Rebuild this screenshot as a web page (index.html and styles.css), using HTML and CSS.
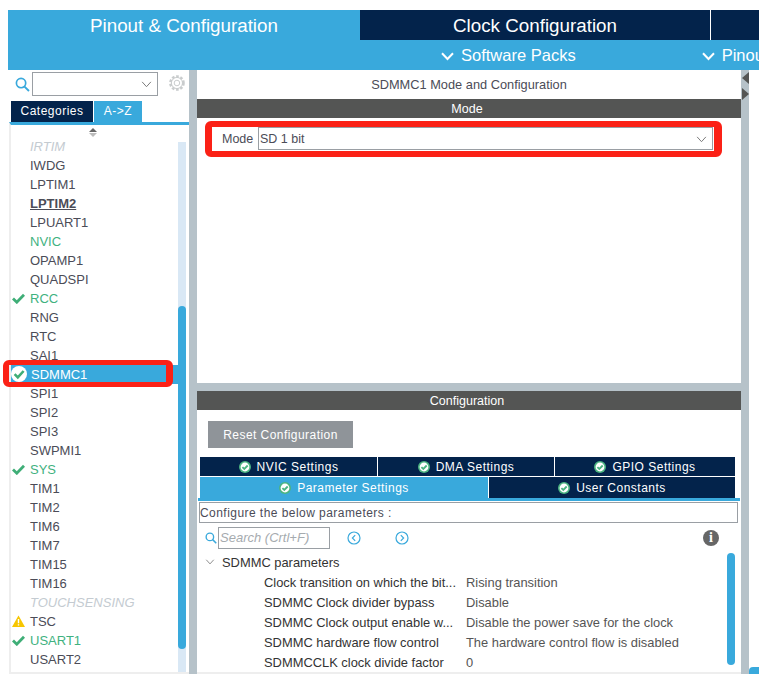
FILE: index.html

```html
<!DOCTYPE html>
<html lang="en">
<head>
  <meta charset="UTF-8">
  <title>SDMMC1 Mode and Configuration</title>
  <link rel="stylesheet" href="styles.css">
</head>
<body>
  <svg class="defs" width="0" height="0">
    <symbol id="tick-round" viewBox="0 0 12 12">
      <circle cx="6" cy="6" r="6" fill="#4cb582"/>
      <circle cx="6" cy="6" r="4.4" fill="#fff"/>
      <path d="M3.4 6.1 5.3 8 8.7 4.5" fill="none" stroke="#4cb582" stroke-width="1.8"/>
    </symbol>
    <symbol id="tick-white" viewBox="0 0 16 16">
      <circle cx="8" cy="8" r="8" fill="#fff"/>
      <path d="M3.6 8.2 6.8 11.4 12.6 5" fill="none" stroke="#3fae77" stroke-width="2.6"/>
    </symbol>
    <symbol id="tick" viewBox="0 0 13 11">
      <path d="M1 5.5 4.8 9.2 12 1.8" fill="none" stroke="#3fae77" stroke-width="2.8"/>
    </symbol>
    <symbol id="chev" viewBox="0 0 12 8">
      <path d="M1 1 6 6.5 11 1" fill="none" stroke="currentColor" stroke-width="1.1"/>
    </symbol>
    <symbol id="chev-bold" viewBox="0 0 13 9">
      <path d="M1 1.2 6.5 7 12 1.2" fill="none" stroke="currentColor" stroke-width="2"/>
    </symbol>
    <symbol id="glass" viewBox="0 0 16 16">
      <circle cx="6.5" cy="6.5" r="5" fill="none" stroke="currentColor" stroke-width="1.8"/>
      <path d="M10.2 10.2 15 15" stroke="currentColor" stroke-width="2"/>
    </symbol>
  </svg>

  <header class="topbar">
    <nav class="main-tabs">
      <div class="main-tab active">Pinout &amp; Configuration</div>
      <div class="main-tab clock">Clock Configuration</div>
      <div class="main-tab rest"></div>
    </nav>
    <div class="sub-menu">
      <span class="sub-item packs"><svg class="sub-chev"><use href="#chev-bold"/></svg>Software Packs</span>
      <span class="sub-item pinout"><svg class="sub-chev"><use href="#chev-bold"/></svg>Pinout</span>
    </div>
  </header>

  <main class="workspace">
    <aside class="sidebar">
      <div class="search-row">
        <svg class="search-icon"><use href="#glass"/></svg>
        <div class="combo"><svg class="combo-chev"><use href="#chev"/></svg></div>
        <svg class="gear" viewBox="0 0 18 18">
          <circle cx="9" cy="9" r="6.6" fill="none" stroke="#c9cccd" stroke-width="2.6" stroke-dasharray="2.6 1.7"/>
          <circle cx="9" cy="9" r="5.6" fill="none" stroke="#c9cccd" stroke-width="1"/>
          <circle cx="9" cy="9" r="2.8" fill="none" stroke="#c9cccd" stroke-width="1"/>
        </svg>
      </div>
      <div class="side-tabs">
        <div class="side-tab">Categories</div>
        <div class="side-tab active">A-&gt;Z</div>
      </div>
      <div class="peri-box">
        <div class="sort-arrows"><i class="up"></i><i class="down"></i></div>
        <ul class="peri-list">
          <li class="off">IRTIM</li>
          <li>IWDG</li>
          <li>LPTIM1</li>
          <li class="bold">LPTIM2</li>
          <li>LPUART1</li>
          <li class="green">NVIC</li>
          <li>OPAMP1</li>
          <li>QUADSPI</li>
          <li class="green"><svg class="mark"><use href="#tick"/></svg>RCC</li>
          <li>RNG</li>
          <li>RTC</li>
          <li>SAI1</li>
          <li class="selected"><svg class="mark-round"><use href="#tick-white"/></svg>SDMMC1</li>
          <li>SPI1</li>
          <li>SPI2</li>
          <li>SPI3</li>
          <li>SWPMI1</li>
          <li class="green"><svg class="mark"><use href="#tick"/></svg>SYS</li>
          <li>TIM1</li>
          <li>TIM2</li>
          <li>TIM6</li>
          <li>TIM7</li>
          <li>TIM15</li>
          <li>TIM16</li>
          <li class="off">TOUCHSENSING</li>
          <li><svg class="mark warn" viewBox="0 0 13 12"><path d="M6.5 0.5 13 12H0Z" fill="#f7c600"/><path d="M6.5 4v4.2M6.5 9.2v1.3" stroke="#fff" stroke-width="1.4"/></svg>TSC</li>
          <li class="green"><svg class="mark"><use href="#tick"/></svg>USART1</li>
          <li>USART2</li>
        </ul>
        <div class="side-scroll"><div class="side-thumb"></div></div>
      </div>
      <div class="callout callout-list"></div>
    </aside>

    <section class="center">
      <div class="mode-panel">
        <h2 class="panel-title">SDMMC1 Mode and Configuration</h2>
        <div class="band">Mode</div>
        <div class="mode-row">
          <span class="mode-label">Mode</span>
          <div class="mode-select">SD 1 bit<svg class="combo-chev"><use href="#chev"/></svg></div>
        </div>
        <div class="callout callout-mode"></div>
      </div>

      <div class="config-panel">
        <div class="band">Configuration</div>
        <button class="reset-btn">Reset Configuration</button>
        <div class="cfg-tabs">
          <div class="cfg-tab nvic"><svg class="tab-tick"><use href="#tick-round"/></svg>NVIC Settings</div>
          <div class="cfg-tab dma"><svg class="tab-tick"><use href="#tick-round"/></svg>DMA Settings</div>
          <div class="cfg-tab"><svg class="tab-tick"><use href="#tick-round"/></svg>GPIO Settings</div>
        </div>
        <div class="cfg-tabs second">
          <div class="cfg-tab active"><svg class="tab-tick"><use href="#tick-round"/></svg>Parameter Settings</div>
          <div class="cfg-tab"><svg class="tab-tick"><use href="#tick-round"/></svg>User Constants</div>
        </div>
        <div class="tabs-line"></div>
        <div class="configure-box">Configure the below parameters :</div>
        <div class="param-search">
          <svg class="param-glass"><use href="#glass"/></svg>
          <div class="param-input">Search (Crtl+F)</div>
          <svg class="nav-btn first" viewBox="0 0 14 14"><circle cx="7" cy="7" r="6" fill="none" stroke="#39a9dc" stroke-width="1.2"/><path d="M8.2 4.2 5.4 7l2.8 2.8" fill="none" stroke="#39a9dc" stroke-width="1.2"/></svg>
          <svg class="nav-btn" viewBox="0 0 14 14"><circle cx="7" cy="7" r="6" fill="none" stroke="#39a9dc" stroke-width="1.2"/><path d="M5.8 4.2 8.6 7l-2.8 2.8" fill="none" stroke="#39a9dc" stroke-width="1.2"/></svg>
          <div class="info">i</div>
        </div>
        <div class="param-tree">
          <div class="tree-head"><svg class="tree-chev"><use href="#chev"/></svg>SDMMC parameters</div>
          <div class="param"><span class="param-name">Clock transition on which the bit...</span><span>Rising transition</span></div>
          <div class="param"><span class="param-name">SDMMC Clock divider bypass</span><span>Disable</span></div>
          <div class="param"><span class="param-name">SDMMC Clock output enable w...</span><span>Disable the power save for the clock</span></div>
          <div class="param"><span class="param-name">SDMMC hardware flow control</span><span>The hardware control flow is disabled</span></div>
          <div class="param"><span class="param-name">SDMMCCLK clock divide factor</span><span>0</span></div>
          <div class="tree-thumb"></div>
        </div>
      </div>
    </section>

    <div class="right-rail">
      <i class="rail-arrow left"></i>
      <i class="rail-arrow right"></i>
    </div>
    <div class="far-right"><div class="far-thumb"></div></div>
  </main>
</body>
</html>
```

FILE: styles.css

```css
* { box-sizing: border-box; }
html, body {
  margin: 0;
  height: 674px;
  overflow: hidden;
}
body {
  background-color: #fff;
  font-family: "Liberation Sans", Arial, sans-serif;
  font-size: 13px;
  color: #4b4c57;
  padding-top: 10px;
}
.defs { position: absolute; }

/* top bar */
.topbar {
  margin-left: 8px;
  height: 60px;
  background-color: #39a9dc;
  color: #fff;
}
.main-tabs {
  display: flex;
  height: 30px;
}
.main-tab {
  font-size: 18.8px;
  line-height: 31px;
  text-align: center;
  background-color: #03234b;
}
.main-tab.active {
  width: 351px;
  background-color: #39a9dc;
  text-align: left;
  padding-left: 82px;
}
.main-tab.clock {
  width: 351px;
  margin-left: 1px;
  border-right: 1px solid #fff;
}
.main-tab.rest { flex: 1; }
.sub-menu {
  display: flex;
  height: 30px;
  font-size: 16.5px;
  line-height: 31px;
  padding-left: 433px;
}
.sub-item { white-space: nowrap; }
.sub-item.pinout { margin-left: 126px; }
.sub-chev {
  width: 13px;
  height: 9px;
  margin-right: 7px;
}

/* main area */
.workspace {
  display: flex;
  height: 604px;
  margin-left: 8px;
}
.sidebar {
  position: relative;
  width: 181px;
  flex: none;
}
.search-row {
  display: flex;
  align-items: center;
  height: 26px;
  margin-bottom: 5px;
  padding: 2px 3px 0 7px;
  color: #39a9dc;
}
.search-icon {
  width: 15px;
  height: 15px;
  margin-right: 2px;
}
.combo {
  position: relative;
  width: 127px;
  height: 24px;
  border: 1px solid #9a9fa4;
  background-color: #fff;
  color: #777;
}
.combo-chev {
  position: absolute;
  right: 5px;
  top: 8px;
  width: 11px;
  height: 7px;
  color: #777;
}
.gear {
  width: 18px;
  height: 18px;
  margin: -2px 0 0 10px;
}
.side-tabs {
  display: flex;
  gap: 1px;
  height: 21px;
  margin-left: 3px;
}
.side-tab {
  width: 82px;
  font-size: 12px;
  line-height: 20px;
  text-align: center;
  letter-spacing: 0.5px;
  color: #fff;
  background-color: #03234b;
}
.side-tab.active {
  width: 48px;
  background-color: #39a9dc;
}
.peri-box {
  position: relative;
  height: 552px;
  overflow: hidden;
  margin-left: 1px;
  border-top: 3px solid #39a9dc;
  border-left: 2px solid #eee;
  border-bottom: 2px solid #eee;
  background-color: #fff;
}
.sort-arrows {
  position: absolute;
  left: 78px;
  top: 3px;
  z-index: 1;
}
.sort-arrows i {
  display: block;
  width: 0;
  height: 0;
  margin-bottom: 1px;
  border-left: 4px solid transparent;
  border-right: 4px solid transparent;
}
.sort-arrows .up { border-bottom: 4px solid #666; }
.sort-arrows .down { border-top: 4px solid #bbb; }
.peri-list {
  list-style: none;
  margin: 0;
  padding: 16px 0 0;
  height: 100%;
}
.peri-list li {
  position: relative;
  height: 19px;
  line-height: 19px;
  padding-left: 19px;
  white-space: nowrap;
}
.peri-list .off {
  font-style: italic;
  color: #c4cbd1;
}
.peri-list li.off:first-child {
  height: 15px;
  line-height: 11px;
  clip-path: inset(1px 0 0 0);
}
.peri-list .bold {
  font-weight: bold;
  text-decoration: underline;
}
.peri-list .green { color: #3fb27f; }
.peri-list .selected {
  width: 168px;
  color: #fff;
  background-color: #39a9dc;
  padding-left: 20px;
}
.mark {
  position: absolute;
  left: 1px;
  top: 4px;
  width: 13px;
  height: 11px;
}
.mark.warn {
  height: 12px;
  top: 3px;
}
.mark-round {
  position: absolute;
  left: 0;
  top: 1px;
  width: 16px;
  height: 16px;
}
.side-scroll {
  position: absolute;
  right: 3px;
  top: 17px;
  bottom: 0;
  width: 8px;
  background-color: #d9e8f5;
}
.side-thumb {
  height: 343px;
  margin-top: 164px;
  background-color: #39a9dc;
  border-radius: 4px;
}

.callout {
  position: absolute;
  border: 6px solid #fb2116;
  border-radius: 6px;
  z-index: 3;
}
.callout-list {
  left: -5px;
  top: 290px;
  width: 170px;
  height: 27px;
  border-width: 5px 7px 5px 6px;
}

.center {
  display: flex;
  flex-direction: column;
  width: 552px;
  flex: none;
  background-color: #b6c2c9;
  padding-left: 8px;
}
.mode-panel {
  position: relative;
  height: 313px;
  background-color: #fff;
}
.panel-title {
  margin: 0;
  height: 29px;
  font-size: 12.8px;
  font-weight: normal;
  line-height: 30px;
  text-align: center;
}
.band {
  height: 19px;
  line-height: 20px;
  font-size: 12.5px;
  color: #fff;
  text-align: center;
  padding-right: 4px;
  background-color: #545554;
}
.mode-row {
  display: flex;
  align-items: center;
  height: 23px;
  margin: 9px 28px 0 25px;
  font-size: 12.5px;
}
.mode-label { width: 36px; }
.mode-select {
  position: relative;
  flex: 1;
  height: 23px;
  line-height: 22px;
  padding-left: 1px;
  border: 1px solid #9a9fa4;
}
.callout-mode {
  left: 8px;
  top: 51px;
  width: 517px;
  height: 36px;
  border-width: 6px 8px 6px 7px;
}

.config-panel {
  margin-top: 8px;
  height: 283px;
  border-bottom: 2px solid #eee;
  background-color: #fff;
}
.reset-btn {
  display: block;
  width: 145px;
  height: 27px;
  margin: 11px 0 9px 11px;
  border: 0;
  font-family: inherit;
  font-size: 12px;
  letter-spacing: 0.45px;
  color: #fff;
  background-color: #8f9499;
}
.cfg-tabs {
  display: flex;
  gap: 1px;
  height: 19px;
  margin: 0 6px 1px 3px;
}
.cfg-tabs.second {
  height: 21px;
  margin-bottom: 0;
}
.cfg-tab {
  flex: 1;
  display: flex;
  align-items: center;
  justify-content: center;
  font-size: 12px;
  letter-spacing: 0.5px;
  color: #fff;
  background-color: #03234b;
}
.cfg-tab.nvic {
  flex: none;
  width: 177px;
}
.cfg-tab.dma {
  flex: none;
  width: 176px;
}
.cfg-tab.active {
  flex: none;
  width: 288px;
  background-color: #39a9dc;
}
.tab-tick {
  width: 12px;
  height: 12px;
  margin-right: 6px;
}
.tabs-line {
  height: 3px;
  margin: 0 1px 1px;
  background-color: #39a9dc;
}
.configure-box {
  height: 21px;
  margin: 0 3px 0 2px;
  padding-left: 0;
  font-size: 12px;
  letter-spacing: 0.45px;
  line-height: 20px;
  border: 1px solid #9a9fa4;
}
.param-search {
  display: flex;
  align-items: center;
  height: 22px;
  margin-top: 4px;
  padding-left: 8px;
  color: #39a9dc;
}
.param-glass {
  width: 12px;
  height: 12px;
  margin-right: 1px;
}
.param-input {
  width: 112px;
  height: 22px;
  padding-left: 1px;
  font-style: italic;
  font-size: 13px;
  line-height: 20px;
  color: #a6abaf;
  border: 1px solid #9a9fa4;
}
.nav-btn {
  width: 14px;
  height: 14px;
  margin-left: 34px;
}
.nav-btn.first { margin-left: 17px; }
.info {
  width: 16px;
  height: 16px;
  margin-left: 294px;
  border-radius: 50%;
  font-family: "Liberation Serif", serif;
  font-weight: bold;
  font-size: 14px;
  line-height: 16px;
  text-align: center;
  color: #fff;
  background-color: #666;
}
.param-tree {
  position: relative;
  height: 118px;
  padding-top: 3px;
  font-size: 12.9px;
  color: #333;
}
.tree-head {
  display: flex;
  align-items: center;
  height: 20px;
  padding-left: 8px;
}
.tree-chev {
  width: 10px;
  height: 6px;
  margin-right: 7px;
  color: #777;
}
.param {
  display: flex;
  height: 20px;
  line-height: 21px;
  padding-left: 67px;
  white-space: nowrap;
}
.param span:last-child { color: #555; }
.param-name {
  width: 202px;
}
.tree-thumb {
  position: absolute;
  right: 6px;
  top: 4px;
  width: 8px;
  height: 112px;
  background-color: #39a9dc;
  border-radius: 4px;
}

.right-rail {
  position: relative;
  width: 8px;
  flex: none;
  background-color: #b6c2c9;
}
.rail-arrow {
  position: absolute;
  left: 1px;
  width: 0;
  height: 0;
  border-top: 6.5px solid transparent;
  border-bottom: 6.5px solid transparent;
}
.rail-arrow.left {
  top: 2px;
  border-right: 7px solid #545554;
}
.rail-arrow.right {
  top: 18px;
  border-left: 7px solid #545554;
}
.far-right {
  position: relative;
  flex: 1;
}
.far-thumb {
  position: absolute;
  left: 0;
  right: 0;
  bottom: 0;
  height: 7px;
  background-color: #39a9dc;
  border-radius: 4px 0 0 0;
}
```
